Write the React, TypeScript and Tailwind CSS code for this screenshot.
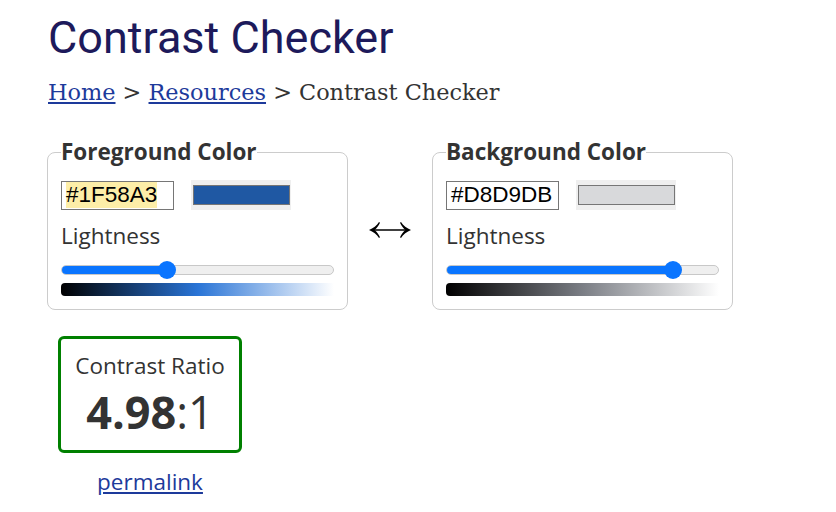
const sans = "font-['Open_Sans',sans-serif]";

function Swatch({ color }: { color: string }) {
  return (
    <div className="w-[100px] h-[30px] bg-[#efefef] flex items-center justify-center">
      <div className="w-[97px] h-[20px] border border-[#767676]" style={{ background: color }} />
    </div>
  );
}

function ColorBox({
  title,
  hex,
  pct,
  gradient,
}: {
  title: string;
  hex: string;
  pct: number;
  gradient: string;
}) {
  return (
    <fieldset className="w-[301px] border border-[#cccccc] rounded-[8px] px-[13px] pt-0 pb-[13px] m-0">
      <legend className={`${sans} font-bold text-[22.5px] text-[#333] px-0 leading-[30px]`}>{title}</legend>
      <div className="flex items-center gap-[17px] mt-[13px]">
        <div className="w-[113px] h-[29px] border border-[#767676] px-[4px] flex items-center">
          <span
            className={`font-['Liberation_Sans',Arial,sans-serif] text-[22.5px] text-black leading-[26px] ${hex === '#1F58A3' ? 'bg-[#fdeea8]' : ''}`}
          >
            {hex}
          </span>
        </div>
        <Swatch color={hex} />
      </div>
      <div className={`${sans} text-[22.5px] text-[#333] mt-[11px] leading-[30px]`}>Lightness</div>
      <div className="relative h-[20px] mt-[9px] flex items-center">
        <div className="w-full h-[10px] rounded-full bg-[#efefef] border border-[#c8c8c8] overflow-hidden">
          <div className="h-full bg-[#0a75ff]" style={{ width: `${pct}%` }} />
        </div>
        <div
          className="absolute w-[18px] h-[18px] rounded-full bg-[#0a75ff] -translate-x-1/2"
          style={{ left: `${pct}%` }}
        />
      </div>
      <div className="h-[13px] mt-[3px] rounded-l-[4px]" style={{ background: gradient }} />
    </fieldset>
  );
}

export default function App() {
  return (
    <div className="w-[836px] h-[512px] bg-white pl-[48px] pt-[12px]">
      <h1 className="font-['Roboto',sans-serif] text-[45px] leading-[52px] text-[#1d1a5b] font-normal">Contrast Checker</h1>
      <nav className="font-['DejaVu_Serif',serif] text-[22.4px] text-[#333] mt-[13px] leading-[30px]">
        <a className="underline text-[#1d3a9b]">Home</a> &gt;{' '}
        <a className="underline text-[#1d3a9b]">Resources</a> &gt; Contrast Checker
      </nav>

      <div className="flex items-center mt-[30px] -ml-[1px]">
        <ColorBox
          title="Foreground Color"
          hex="#1F58A3"
          pct={39}
          gradient="linear-gradient(to right, #000 0%, hsl(214,68%,50%) 50%, #ffffff 100%)"
        />
        <div className="w-[84px] flex justify-center pt-[12px]" aria-label="swap">
          <svg width="44" height="18" viewBox="0 0 44 18">
            <line x1="4" y1="9" x2="40" y2="9" stroke="#000" strokeWidth="1.6" />
            <path d="M1 9 C5 7.5 9 4.5 11 1 L12 1.8 C10.5 5 8.5 7.5 6.5 9 C8.5 10.5 10.5 13 12 16.2 L11 17 C9 13.5 5 10.5 1 9 Z" fill="#000" />
            <path d="M43 9 C39 7.5 35 4.5 33 1 L32 1.8 C33.5 5 35.5 7.5 37.5 9 C35.5 10.5 33.5 13 32 16.2 L33 17 C35 13.5 39 10.5 43 9 Z" fill="#000" />
          </svg>
        </div>
        <ColorBox
          title="Background Color"
          hex="#D8D9DB"
          pct={83}
          gradient="linear-gradient(to right, #000 0%, hsl(220,4%,50%) 50%, #ffffff 100%)"
        />
      </div>

      <div className="w-[184px] ml-[10px] mt-[26px] flex flex-col items-center">
        <div className="w-[184px] h-[117px] border-[3px] border-[#008000] rounded-[6px] flex flex-col items-center pt-[12px]">
          <div className={`${sans} text-[22.5px] text-[#333] leading-[30px]`}>Contrast Ratio</div>
          <div className={`${sans} text-[45px] text-[#333] leading-[56px] mt-[3px]`}>
            <span className="font-bold">4.98</span>:1
          </div>
        </div>
        <a className={`${sans} text-[22.5px] text-[#1d3a9b] underline mt-[14px] leading-[30px]`}>permalink</a>
      </div>
    </div>
  );
}
